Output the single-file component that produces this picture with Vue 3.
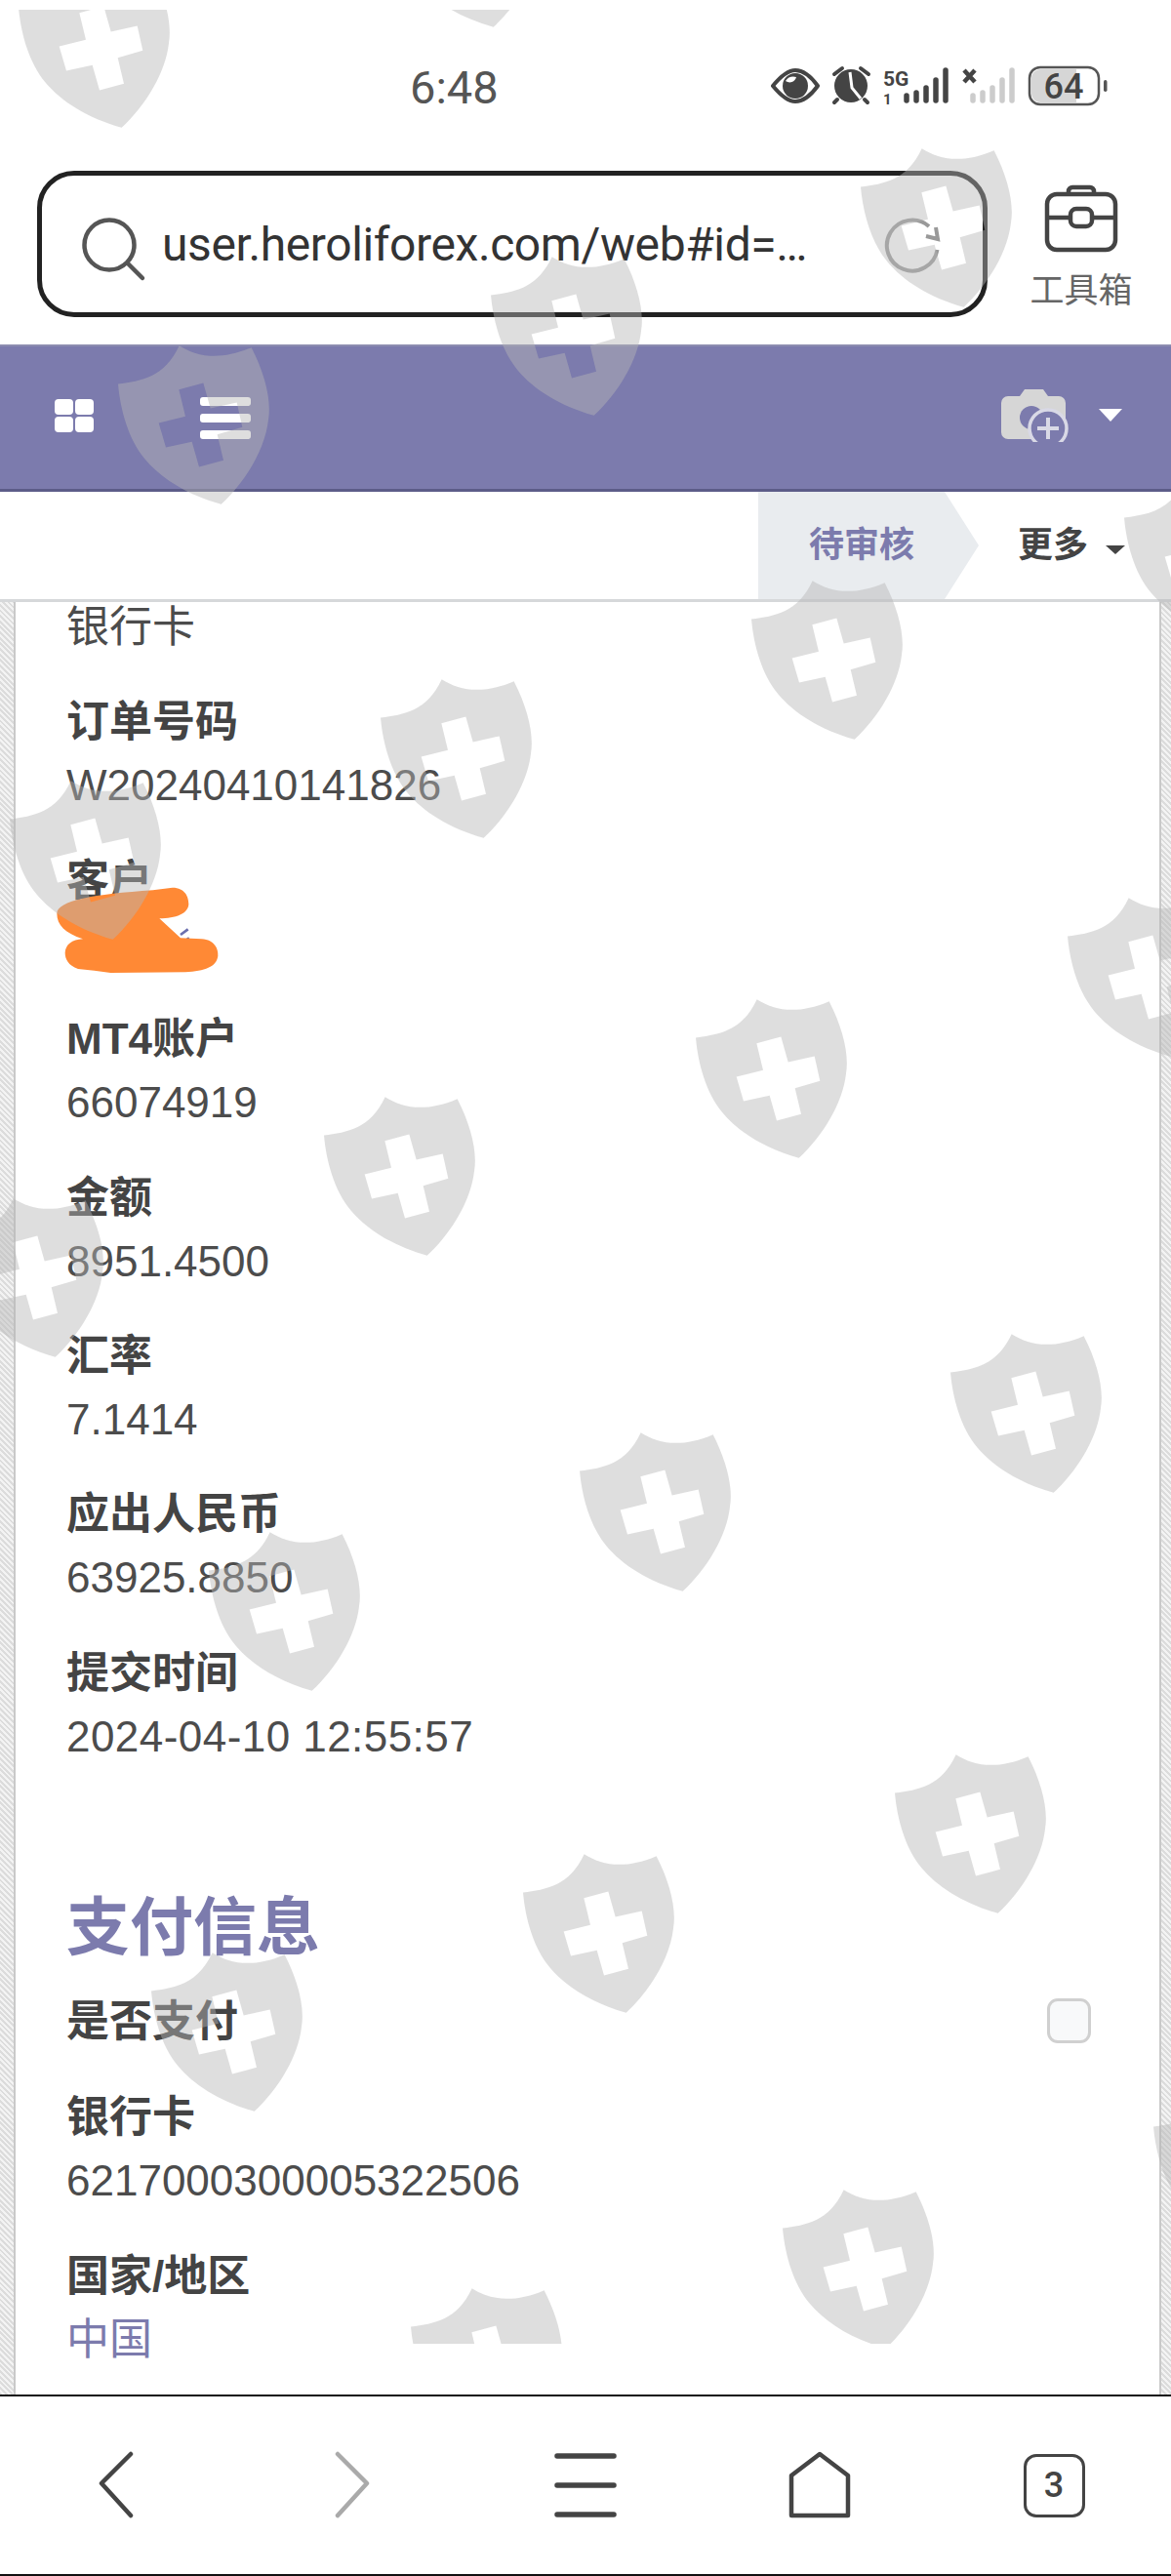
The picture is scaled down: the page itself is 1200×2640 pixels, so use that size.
<script setup>
const shields = [
  [19, -32], [400, -135], [882, 152], [503, 263], [121, 354], [770, 595], [390, 696], [10, 800],
  [1152, 491], [1094, 920], [713, 1024], [332, 1124], [-49, 1228], [974, 1367], [594, 1468],
  [214, 1570], [917, 1798], [536, 1900], [155, 2001], [802, 2244], [421, 2345], [1182, 2140]
].map(([x, y]) => ({ left: x + 'px', top: y - 10 + 'px' }))

const firstRows = [
  { label: '订单号码', value: 'W20240410141826' },
  { label: '客户', value: '', redacted: true },
  { label: 'MT4账户', value: '66074919' },
  { label: '金额', value: '8951.4500' },
  { label: '汇率', value: '7.1414' },
  { label: '应出人民币', value: '63925.8850' },
  { label: '提交时间', value: '2024-04-10 12:55:57', spaced: true }
]
const signalX = [929, 939, 949, 959, 969]
const signalTop = [95, 92, 87, 79, 69]
</script>

<template>
  <div class="page">
    <header class="status">
      <span class="time">6:48</span>
      <svg class="status-icons" viewBox="790 65 346 46" width="346" height="46">
        <path d="M792 88C801 77 808 72 815 72C823 72 830 77 838 88C830 99 823 104 815 104C808 104 801 99 792 88Z" fill="none" stroke="#444" stroke-width="4" stroke-linejoin="round"/>
        <circle cx="815" cy="88" r="13" fill="#444"/>
        <path d="M805 83A7 7 0 0 0 816 79A10 10 0 0 0 805 83Z" fill="#fff"/>
        <circle cx="872" cy="88" r="17" fill="#444"/>
        <path d="M871 74L873 90L882 101" fill="none" stroke="#fff" stroke-width="3"/>
        <path d="M855 76L863 70M890 76L882 70M858 102L855 105M886 102L889 105" stroke="#444" stroke-width="4" stroke-linecap="round"/>
        <text x="905" y="88" class="s5g">5G</text>
        <text x="905" y="107" class="s1">1</text>
        <g stroke-width="5.5" stroke-linecap="round">
          <line v-for="(x, i) in signalX" :key="x" :x1="x" :x2="x" :y1="signalTop[i] + 3" y2="103" stroke="#444"/>
          <line v-for="(x, i) in signalX" :key="'b' + x" :x1="x + 68" :x2="x + 68" :y1="signalTop[i] + 3" y2="103" stroke="#ccc"/>
        </g>
        <path d="M988 72L999 84M999 72L988 84" stroke="#444" stroke-width="4.5"/>
        <rect x="1055" y="69" width="71" height="38" rx="11" fill="#fff" stroke="#555" stroke-width="2.5"/>
        <path d="M1066 71H1103V105H1066A9 9 0 0 1 1057 96V80A9 9 0 0 1 1066 71Z" fill="#d6d6d6"/>
        <text x="1090" y="101" class="batt">64</text>
        <rect x="1131" y="82" width="3.5" height="12" rx="1.7" fill="#555"/>
      </svg>
    </header>

    <div class="urlrow">
      <div class="urlbox">
        <svg class="search" viewBox="0 0 70 70" width="70" height="70">
          <circle cx="31" cy="31" r="25.5" fill="none" stroke="#555" stroke-width="4.5"/>
          <path d="M50 50L65 65" stroke="#555" stroke-width="4.5" stroke-linecap="round"/>
        </svg>
        <span class="url">user.heroliforex.com/web#id=…</span>
        <svg class="reload" viewBox="0 0 60 60" width="60" height="60">
          <path d="M55.5 36A26 26 0 1 1 47 12" fill="none" stroke="#999" stroke-width="4"/>
          <path d="M54 13L56 25L44 22" fill="none" stroke="#999" stroke-width="4"/>
        </svg>
      </div>
      <div class="tools">
        <svg viewBox="0 0 76 70" width="76" height="70">
          <path d="M25 10V7A4 4 0 0 1 29 3H47A4 4 0 0 1 51 7V10" fill="none" stroke="#444" stroke-width="4.5"/>
          <rect x="3" y="10" width="70" height="57" rx="10" fill="none" stroke="#444" stroke-width="4.5"/>
          <path d="M3 34H27M49 34H73" stroke="#444" stroke-width="4.5"/>
          <rect x="27" y="25" width="22" height="18" rx="6" fill="none" stroke="#444" stroke-width="4.5"/>
        </svg>
        <span class="tools-label">工具箱</span>
      </div>
    </div>

    <nav class="appbar">
      <div class="grid-icon"><i></i><i></i><i></i><i></i></div>
      <div class="bars-icon"><i></i><i></i><i></i></div>
      <svg class="camera" viewBox="0 0 72 54" width="72" height="54">
        <path d="M8 7H20L25 0H44L49 7H60A7 7 0 0 1 67 14V44A7 7 0 0 1 60 51H8A7 7 0 0 1 1 44V14A7 7 0 0 1 8 7Z" fill="#d6d6d6"/>
        <circle cx="32" cy="29" r="12" fill="#7c7bad"/>
        <circle cx="49" cy="40" r="19" fill="#7c7bad" stroke="#d9d9e6" stroke-width="3.5"/>
        <path d="M38 40H60M49 29V51" stroke="#d9d9e6" stroke-width="4"/>
      </svg>
      <span class="caret-white"></span>
    </nav>

    <div class="statebar">
      <div class="stage">待审核</div>
      <div class="more">更多<span class="caret-dark"></span></div>
    </div>

    <main class="viewport">
      <div class="sheet">
        <div class="scroll">
          <div class="row"><div class="value">银行卡</div></div>
          <div v-for="r in firstRows" :key="r.label" class="row">
            <div class="label">{{ r.label }}</div>
            <div class="value" :class="{ spaced: r.spaced }">
              {{ r.value }}
              <svg v-if="r.redacted" class="scribble" viewBox="0 0 780 480" width="260" height="160">
                <path d="M178 285V302M465 285L488 268M486 294L490 300" stroke="#6a6fae" stroke-width="8"/>
                <path d="M85 220C85 180 200 160 380 148L440 140C480 140 490 170 490 190C490 220 450 235 400 235L465 295L530 298C570 300 582 330 580 350C575 385 540 395 480 400L250 402L200 395L150 390C120 380 110 360 110 340C112 315 130 300 165 298C110 280 85 255 85 220Z" fill="#ff8935"/>
              </svg>
            </div>
          </div>
          <h2 class="section">支付信息</h2>
          <div class="row check-row">
            <div class="label">是否支付</div>
            <span class="checkbox"></span>
          </div>
          <div class="row">
            <div class="label">银行卡</div>
            <div class="value">6217000300005322506</div>
          </div>
          <div class="row">
            <div class="label">国家/地区</div>
            <div class="value link">中国</div>
          </div>
        </div>
      </div>
    </main>

    <footer class="bottom">
      <div class="cell">
        <svg viewBox="0 0 40 70" width="40" height="70"><path d="M34 3L4 33L34 66" fill="none" stroke="#444" stroke-width="4.5" stroke-linecap="round" stroke-linejoin="round"/></svg>
      </div>
      <div class="cell">
        <svg viewBox="0 0 40 70" width="40" height="70"><path d="M6 3L36 33L6 66" fill="none" stroke="#aaa" stroke-width="4.5" stroke-linecap="round" stroke-linejoin="round"/></svg>
      </div>
      <div class="cell">
        <svg viewBox="0 0 66 70" width="66" height="70"><path d="M4 5H62M4 35H62M4 65H62" stroke="#444" stroke-width="5.5" stroke-linecap="round"/></svg>
      </div>
      <div class="cell">
        <svg viewBox="0 0 70 70" width="70" height="70"><path d="M35 3L64 25V66H6V25Z" fill="none" stroke="#444" stroke-width="4.5" stroke-linejoin="round"/></svg>
      </div>
      <div class="cell">
        <div class="tabs">3</div>
      </div>
    </footer>

    <div class="watermarks">
      <svg v-for="(s, i) in shields" :key="i" class="shield" :style="s" viewBox="38 72 465 488" width="155" height="163">
        <path fill-rule="evenodd" d="M226 72C280 106 350 120 448 78C490 160 510 240 500 300C490 390 430 490 355 560C250 530 170 480 120 420C70 360 45 270 38 190C110 180 180 170 226 72ZM225 207L245 290L163 310L185 385L265 368L287 445L362 425L343 345L420 323L403 247L322 265L300 187Z"/>
      </svg>
    </div>
  </div>
</template>

<style>
html, body { margin: 0; background: #fff; }
</style>

<style scoped>
.page {
  position: relative;
  width: 1200px;
  height: 2640px;
  overflow: hidden;
  background: #fff;
  display: flex;
  flex-direction: column;
  font-family: "Liberation Sans", "Noto Sans CJK SC", sans-serif;
}
.status {
  height: 176px;
  flex: none;
  display: flex;
  align-items: center;
  padding-left: 420px;
}
.time {
  font-family: Roboto, sans-serif;
  font-weight: 400;
  font-size: 47px;
  color: #555;
  width: 370px;
  margin-top: 2px;
}
.status-icons { flex: none; }
.s5g { font: 700 21px "Roboto", sans-serif; fill: #444; }
.s1 { font: 700 15px "Roboto", sans-serif; fill: #444; }
.batt { font: 500 36px "Roboto", sans-serif; fill: #444; text-anchor: middle; }
.urlrow {
  height: 177px;
  flex: none;
  display: flex;
  align-items: flex-start;
  padding-left: 38px;
}
.urlbox {
  box-sizing: border-box;
  width: 974px;
  height: 150px;
  margin-top: -1px;
  border: 5px solid #222;
  border-radius: 38px;
  display: flex;
  align-items: center;
  padding-left: 38px;
  padding-right: 42px;
}
.search { flex: none; margin-top: 10px; }
.url {
  margin-left: 15px;
  font-family: Roboto, sans-serif;
  font-size: 48px;
  letter-spacing: -0.4px;
  color: #333;
  white-space: nowrap;
}
.reload { margin-left: auto; flex: none; }
.tools {
  width: 110px;
  margin-left: 41px;
  margin-top: 13px;
  display: flex;
  flex-direction: column;
  align-items: center;
}
.tools-label {
  margin-top: 13px;
  font-size: 35px;
  line-height: 46px;
  color: #666;
  font-family: "Noto Sans CJK SC", sans-serif;
  white-space: nowrap;
}
.appbar {
  box-sizing: border-box;
  height: 151px;
  flex: none;
  background: #7c7bad;
  border-top: 2px solid #8d8db0;
  border-bottom: 3px solid #5c5c88;
  display: flex;
  align-items: center;
  padding-left: 56px;
  padding-right: 50px;
}
.grid-icon {
  display: grid;
  grid-template-columns: 19px 19px;
  grid-auto-rows: 16px;
  gap: 2px;
  margin-top: -4px;
}
.grid-icon i { background: #fff; border-radius: 4px; }
.bars-icon {
  margin-left: 109px;
  display: flex;
  flex-direction: column;
  gap: 8px;
}
.bars-icon i { display: block; width: 52px; height: 9px; background: #fff; border-radius: 3px; }
.camera { margin-left: auto; margin-top: -4px; }
.caret-white {
  margin-left: 29px;
  margin-top: -5px;
  width: 0;
  height: 0;
  border-left: 12px solid transparent;
  border-right: 12px solid transparent;
  border-top: 13px solid #fff;
}
.statebar {
  box-sizing: border-box;
  height: 113px;
  flex: none;
  display: flex;
  justify-content: flex-end;
  border-bottom: 3px solid #d6d8da;
}
.stage {
  box-sizing: border-box;
  width: 226px;
  padding-left: 52px;
  line-height: 110px;
  font-size: 36px;
  font-weight: 700;
  color: #7c7bad;
  background: #e9ecef;
  clip-path: polygon(0 0, 191px 0, 226px 50%, 191px 100%, 0 100%);
}
.more {
  width: 197px;
  box-sizing: border-box;
  padding-left: 40px;
  line-height: 110px;
  font-size: 36px;
  font-weight: 700;
  color: #444;
  display: flex;
  align-items: center;
}
.caret-dark {
  margin-left: 18px;
  margin-top: 8px;
  width: 0;
  height: 0;
  border-left: 10px solid transparent;
  border-right: 10px solid transparent;
  border-top: 9px solid #444;
}
.viewport {
  flex: 1;
  min-height: 0;
  box-sizing: border-box;
  padding: 0 10px 0 14px;
  background: repeating-linear-gradient(45deg, #dcdcdc 0 2px, #f3f3f3 2px 4px);
}
.sheet {
  box-sizing: border-box;
  height: 100%;
  background: #fff;
  border-left: 2px solid #c9c9c9;
  border-right: 2px solid #c9c9c9;
  overflow: hidden;
}
.scroll {
  padding: 0 70px 0 52px;
  margin-top: -7px;
}
.row { margin-bottom: 32.4px; position: relative; }
.label {
  font-size: 44px;
  line-height: 65px;
  font-weight: 700;
  color: #444;
}
.value {
  position: relative;
  height: 65px;
  font-size: 44px;
  line-height: 65px;
  color: #4c4c4c;
}
.spaced { letter-spacing: 0.45px; }
.link { color: #7c7bad; }
.scribble { position: absolute; left: -38px; top: -72px; }
.section {
  margin: 129px 0 0;
  height: 69px;
  font-size: 65px;
  line-height: 69px;
  font-weight: 700;
  color: #7c7bad;
}
.check-row {
  display: flex;
  align-items: center;
  justify-content: space-between;
  margin-top: 29px;
  margin-bottom: 33.5px;
}
.checkbox {
  box-sizing: border-box;
  width: 45px;
  height: 46px;
  background: #f8f9fa;
  border: 3px solid #d0d0d0;
  border-radius: 11px;
}
.bottom {
  box-sizing: border-box;
  height: 186px;
  flex: none;
  display: grid;
  grid-template-columns: repeat(5, 240px);
  align-items: center;
  justify-items: center;
  border-top: 2px solid #111;
  border-bottom: 2px solid #111;
  background: #fff;
}
.cell { display: flex; align-items: center; justify-content: center; height: 70px; }
.tabs {
  box-sizing: border-box;
  width: 63px;
  height: 65px;
  border: 3.5px solid #444;
  border-radius: 13px;
  text-align: center;
  font: 500 36px/58px Roboto, sans-serif;
  color: #444;
}
.watermarks {
  position: absolute;
  left: 0;
  top: 10px;
  width: 1200px;
  height: 2392px;
  overflow: hidden;
  pointer-events: none;
}
.shield { position: absolute; fill: #b6b6b6; fill-opacity: 0.45; }
</style>
